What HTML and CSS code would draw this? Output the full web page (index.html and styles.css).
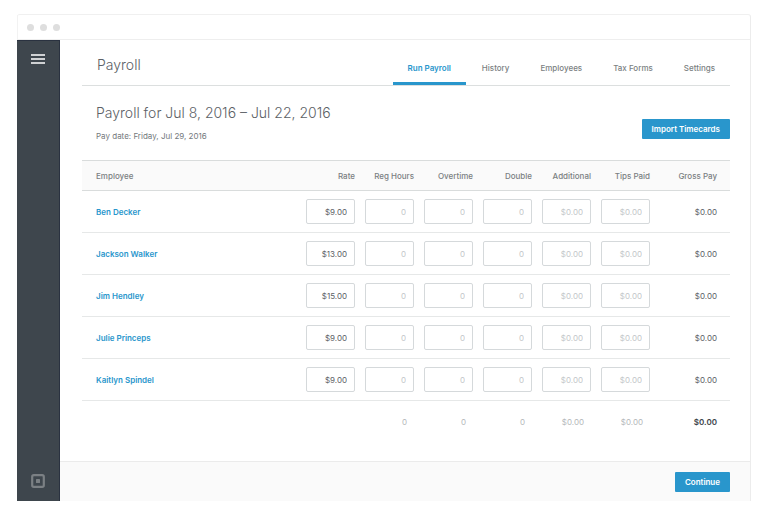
FILE: index.html
```html
<!doctype html>
<html lang="en">
  <head>
    <meta charset="UTF-8" />
    <meta name="viewport" content="width=device-width, initial-scale=1" />
    <title>Payroll</title>
    <link rel="stylesheet" href="styles.css">
  </head>

  <body>
    <div class="window">
      <div class="title-bar">
        <span class="dot"></span>
        <span class="dot"></span>
        <span class="dot"></span>
      </div>

      <div class="app">
        <aside class="sidebar">
          <button class="menu-button" type="button" aria-label="Menu">
            <svg width="14" height="10" viewBox="0 0 14 10">
              <path d="M0 1h14M0 5h14M0 9h14" stroke="#fff" stroke-width="1.4" />
            </svg>
          </button>
          <svg class="logo" width="14" height="14" viewBox="0 0 14 14">
            <rect x="1.2" y="1.2" width="11.6" height="11.6" rx="1.6" fill="none" stroke="#7b8084" stroke-width="2.2" />
            <rect x="5" y="5" width="4" height="4" rx="0.6" fill="#7b8084" />
          </svg>
        </aside>

        <main class="main">
          <header class="header">
            <h1>Payroll</h1>
            <nav class="tabs">
              <a class="tab active" href="#run">Run Payroll</a>
              <a class="tab" href="#history">History</a>
              <a class="tab" href="#employees">Employees</a>
              <a class="tab" href="#tax-forms">Tax Forms</a>
              <a class="tab" href="#settings">Settings</a>
            </nav>
          </header>

          <section class="period">
            <div>
              <h2>Payroll for Jul 8, 2016 – Jul 22, 2016</h2>
              <p class="pay-date">Pay date: Friday, Jul 29, 2016</p>
            </div>
            <button class="button" type="button">Import Timecards</button>
          </section>

          <table class="payroll">
            <thead>
              <tr>
                <th class="name">Employee</th>
                <th class="amount">Rate</th>
                <th class="amount">Reg Hours</th>
                <th class="amount">Overtime</th>
                <th class="amount">Double</th>
                <th class="amount">Additional</th>
                <th class="amount">Tips Paid</th>
                <th class="gross">Gross Pay</th>
              </tr>
            </thead>
            <tbody>
              <tr>
                <td class="name"><a href="#ben">Ben Decker</a></td>
                <td><input type="text" aria-label="Ben Decker rate" value="$9.00"></td>
                <td><input type="text" aria-label="Ben Decker regular hours" placeholder="0"></td>
                <td><input type="text" aria-label="Ben Decker overtime" placeholder="0"></td>
                <td><input type="text" aria-label="Ben Decker double" placeholder="0"></td>
                <td><input type="text" aria-label="Ben Decker additional" placeholder="$0.00"></td>
                <td><input type="text" aria-label="Ben Decker tips paid" placeholder="$0.00"></td>
                <td class="gross">$0.00</td>
              </tr>
              <tr>
                <td class="name"><a href="#jackson">Jackson Walker</a></td>
                <td><input type="text" aria-label="Jackson Walker rate" value="$13.00"></td>
                <td><input type="text" aria-label="Jackson Walker regular hours" placeholder="0"></td>
                <td><input type="text" aria-label="Jackson Walker overtime" placeholder="0"></td>
                <td><input type="text" aria-label="Jackson Walker double" placeholder="0"></td>
                <td><input type="text" aria-label="Jackson Walker additional" placeholder="$0.00"></td>
                <td><input type="text" aria-label="Jackson Walker tips paid" placeholder="$0.00"></td>
                <td class="gross">$0.00</td>
              </tr>
              <tr>
                <td class="name"><a href="#jim">Jim Hendley</a></td>
                <td><input type="text" aria-label="Jim Hendley rate" value="$15.00"></td>
                <td><input type="text" aria-label="Jim Hendley regular hours" placeholder="0"></td>
                <td><input type="text" aria-label="Jim Hendley overtime" placeholder="0"></td>
                <td><input type="text" aria-label="Jim Hendley double" placeholder="0"></td>
                <td><input type="text" aria-label="Jim Hendley additional" placeholder="$0.00"></td>
                <td><input type="text" aria-label="Jim Hendley tips paid" placeholder="$0.00"></td>
                <td class="gross">$0.00</td>
              </tr>
              <tr>
                <td class="name"><a href="#julie">Julie Princeps</a></td>
                <td><input type="text" aria-label="Julie Princeps rate" value="$9.00"></td>
                <td><input type="text" aria-label="Julie Princeps regular hours" placeholder="0"></td>
                <td><input type="text" aria-label="Julie Princeps overtime" placeholder="0"></td>
                <td><input type="text" aria-label="Julie Princeps double" placeholder="0"></td>
                <td><input type="text" aria-label="Julie Princeps additional" placeholder="$0.00"></td>
                <td><input type="text" aria-label="Julie Princeps tips paid" placeholder="$0.00"></td>
                <td class="gross">$0.00</td>
              </tr>
              <tr>
                <td class="name"><a href="#kaitlyn">Kaitlyn Spindel</a></td>
                <td><input type="text" aria-label="Kaitlyn Spindel rate" value="$9.00"></td>
                <td><input type="text" aria-label="Kaitlyn Spindel regular hours" placeholder="0"></td>
                <td><input type="text" aria-label="Kaitlyn Spindel overtime" placeholder="0"></td>
                <td><input type="text" aria-label="Kaitlyn Spindel double" placeholder="0"></td>
                <td><input type="text" aria-label="Kaitlyn Spindel additional" placeholder="$0.00"></td>
                <td><input type="text" aria-label="Kaitlyn Spindel tips paid" placeholder="$0.00"></td>
                <td class="gross">$0.00</td>
              </tr>
            </tbody>
            <tfoot>
              <tr>
                <td class="name"></td>
                <td></td>
                <td class="total">0</td>
                <td class="total">0</td>
                <td class="total">0</td>
                <td class="total">$0.00</td>
                <td class="total">$0.00</td>
                <td class="gross">$0.00</td>
              </tr>
            </tfoot>
          </table>

          <footer class="footer">
            <button class="button" type="button">Continue</button>
          </footer>
        </main>
      </div>
    </div>
  </body>
</html>
```

FILE: styles.css
```css
*,
*::before,
*::after {
  margin: 0;
  padding: 0;
  box-sizing: border-box;
}

body {
  min-height: 100vh;
  padding: 14px 23px 25px 17px;
  display: flex;
  background-color: white;
  color: #5c6166;
  font-family: "Inter", sans-serif;
  font-size: 8px;
  line-height: 12px;
}

.window {
  flex: 1;
  display: flex;
  flex-direction: column;
  border-top: 1px solid #f0f0f0;
  border-right: 1px solid #ececec;
  border-radius: 3px 3px 0 0;
}

.title-bar {
  height: 25px;
  padding-left: 9px;
  display: flex;
  align-items: center;
  gap: 6px;
  border-left: 1px solid #f2f2f2;
  border-bottom: 1px solid #eeeeee;
}

.dot {
  width: 7px;
  height: 7px;
  border-radius: 50%;
  background-color: #dedede;
}

.app {
  flex: 1;
  display: flex;
}

.sidebar {
  width: 43px;
  padding: 13px 0;
  display: flex;
  flex-direction: column;
  justify-content: space-between;
  align-items: center;
  background-color: #3e464d;
  border: 1px solid #2a3240;
  border-width: 1px 1px 0 0;
}

.menu-button {
  display: flex;
  border: 0;
  background: none;
}

.main {
  flex: 1;
  display: flex;
  flex-direction: column;
}

.header {
  height: 46px;
  margin: 0 20px 0 22px;
  padding-left: 15px;
  display: flex;
  justify-content: space-between;
  border-bottom: 1px solid #dcdfdf;
}

h1,
h2 {
  font-size: 14px;
  line-height: 20px;
  font-weight: 300;
}

h1 {
  padding-top: 15px;
}

.tabs {
  display: flex;
  gap: 1px;
}

.tab {
  padding: 22px 15px 0;
  color: #7b7f82;
  font-weight: 500;
  text-decoration: none;
}

.tab.active {
  color: #2996cc;
  font-weight: 600;
  border-bottom: 3px solid #2996cc;
}

.period {
  margin: 0 20px 0 22px;
  padding: 17px 0 18px 14px;
  display: flex;
  justify-content: space-between;
  align-items: center;
}

.pay-date {
  margin-top: 7px;
  color: #74797c;
}

.button {
  height: 20px;
  padding: 0 10px;
  border: 0;
  border-radius: 1px;
  background-color: #2996cc;
  color: white;
  font: inherit;
  font-weight: 600;
}

.period .button {
  margin-top: 12px;
}

.payroll {
  margin: 0 20px 0 22px;
  table-layout: fixed;
  border-collapse: collapse;
}

.payroll th,
.payroll td {
  height: 42px;
  padding: 0 5px;
  text-align: right;
}

.payroll th {
  height: 30px;
  background-color: #fafafa;
  color: #7b7f82;
  font-weight: 500;
}

.payroll thead tr {
  border-top: 1px solid #d9dcdc;
  border-bottom: 1px solid #d9dcdc;
}

.payroll tbody tr {
  border-bottom: 1px solid #e6e8e8;
}

.payroll .name {
  padding-left: 14px;
  text-align: left;
}

.payroll .amount {
  width: 59px;
}

.payroll .gross {
  width: 75px;
  padding-right: 13px;
}

.name a {
  color: #2996cc;
  font-weight: 600;
  text-decoration: none;
}

.payroll input {
  display: block;
  width: 100%;
  height: 25px;
  padding: 0 7px;
  border: 1px solid #d5d9db;
  border-radius: 2px;
  background-color: white;
  color: #5c6166;
  font: inherit;
  text-align: right;
}

.payroll input::placeholder {
  color: #c3c7c9;
}

.payroll .total {
  padding-right: 12px;
  color: #b4b8ba;
}

.payroll tfoot .gross {
  color: #3e464d;
  font-weight: 600;
}

.footer {
  margin-top: auto;
  padding: 10px 20px 9px;
  display: flex;
  justify-content: flex-end;
  background-color: #fafafa;
  border-top: 1px solid #ebebeb;
}
```
